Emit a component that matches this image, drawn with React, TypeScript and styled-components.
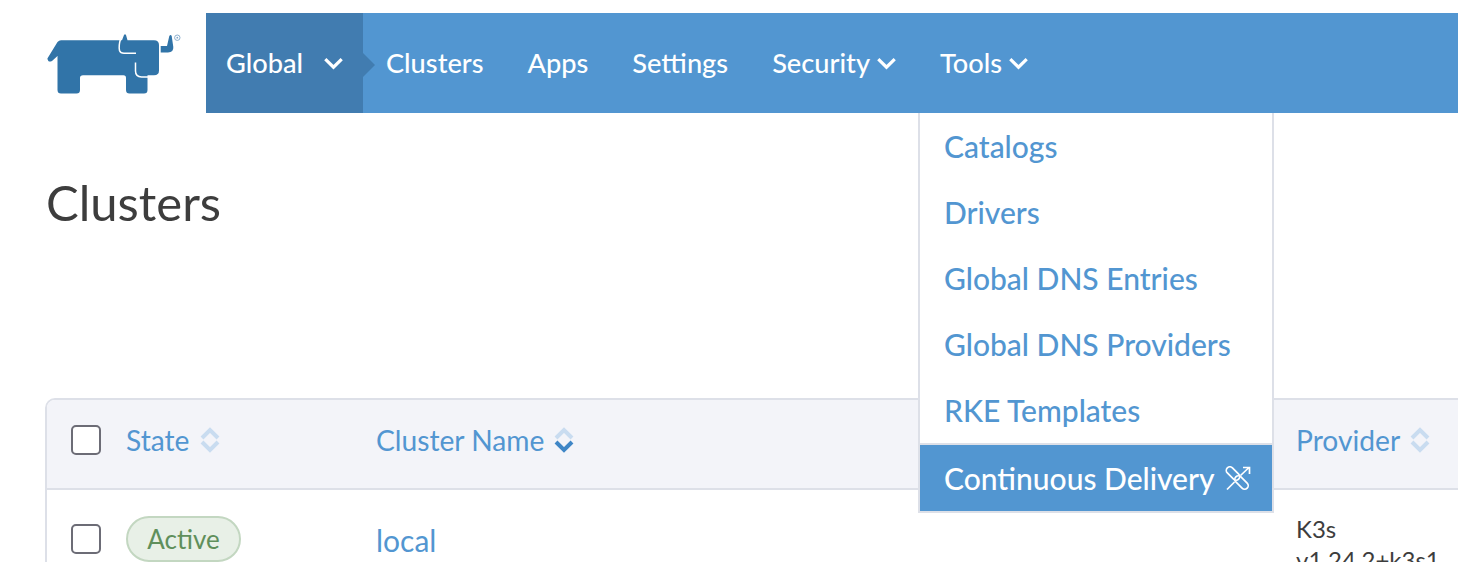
import React from "react";
import styled, { createGlobalStyle } from "styled-components";

const Global = createGlobalStyle`
  html, body { margin: 0; height: 562px; overflow: hidden; background: #fff; }
  body { font-family: Lato, "Open Sans", sans-serif; color: #3d3d3d; }
`;
const Page = styled.div`width: 1458px; height: 562px; overflow: hidden;`;
const Top = styled.header`display: flex; align-items: center; padding-top: 13px; height: 100px;`;
const LogoBox = styled.div`width: 206px; padding-left: 40px; box-sizing: border-box; display: flex; align-items: center;`;
const Nav = styled.nav`flex: 1; height: 100px; display: flex; align-items: center; background: #5296d1; color: #fff; font-size: 27.2px; font-weight: 500;`;
const Scope = styled.div`
  position: relative; width: 157px; height: 100%; box-sizing: border-box; padding: 0 0 2px 20px;
  display: flex; align-items: center; background: #417cb0; margin-right: 1px;
  & > svg { margin-left: 21px; margin-top: 2px; }
  &::after {
    content: ""; position: absolute; left: 100%; top: 40px; width: 12px; height: 24px;
    background: #417cb0; clip-path: polygon(0 0, 100% 50%, 0 100%);
  }
`;
const NavItem = styled.div`
  position: relative; height: 100%; box-sizing: border-box; padding: 0 22px 2px; display: flex; align-items: center; gap: 7px; white-space: nowrap;
  & > svg { margin-top: 2px; }
`;
const Menu = styled.div`
  position: absolute; top: 100%; left: 0; width: 356px; box-sizing: border-box; padding-top: 2px;
  border: solid #dde0e8; border-width: 0 2px 2px 2px; background: #fff; z-index: 2;
`;
const MenuItem = styled.div`
  height: 66px; box-sizing: border-box; padding: 0 0 4px 24px; display: flex; align-items: center; color: #5296d1; font-size: 30px;
`;
const MenuActive = styled(MenuItem)`
  height: 68px; padding-bottom: 0; margin-top: -2px; border-top: 2px solid #dde0e8; background: #5296d1; color: #fff; gap: 10px;
`;
const Main = styled.main`padding: 0 0 0 45px;`;
const Title = styled.h1`margin: 61px 0 0 1px; height: 224px; font-size: 49px; line-height: 56px; font-weight: 400; color: #3d3d3d;`;
const Table = styled.div`width: 1500px; border: 2px solid #dde0e8; border-radius: 10px 0 0 0; box-sizing: border-box;`;
const HeadRow = styled.div`
  display: grid; grid-template-columns: 79px 250px 920px 1fr; align-items: center; height: 80px; padding-bottom: 8px;
  background: #f3f4f9; border-bottom: 2px solid #dde0e8; border-radius: 8px 0 0 0;
`;
const BodyRow = styled.div`
  display: grid; grid-template-columns: 79px 250px 920px 1fr; align-items: start; padding-top: 26px;
`;
const CheckCell = styled.div`padding-left: 24px; display: flex; align-items: center;`;
const Check = styled.span<{ $top?: number }>`
  display: block; width: 30px; height: 30px; box-sizing: border-box; border: 2px solid #6c6c76; border-radius: 5px; background: #fff;
  margin-top: ${(p) => p.$top ?? 0}px;
`;
const HeadCell = styled.div`display: flex; align-items: center; gap: 10px; color: #5296d1; font-size: 28.2px;`;
const Pill = styled.span`
  display: inline-flex; align-items: center; justify-content: center; width: 115px; height: 46px; box-sizing: border-box;
  border: 2px solid #c3d7c1; border-radius: 23px; background: #e8f0e7; color: #5f8f5b; font-size: 26px;
`;
const LinkText = styled.a`display: block; color: #5296d1; font-size: 30px; line-height: 48px;`;
const Provider = styled.div`font-size: 24px; line-height: 31px; color: #3d3d3d; margin-top: -3px;`;

const Chevron = () => (
  <svg width="19" height="13" viewBox="0 0 19 13"><path d="M1.3 2.2L9.5 10.2l8.2-8" fill="none" stroke="#fff" strokeWidth="3.2" /></svg>
);
const Sort = ({ active }: { active?: boolean }) => (
  <svg width="20" height="28" viewBox="0 0 20 28" fill="none" strokeWidth="4">
    <path d="M2 12l8-8 8 8" stroke="#c9dcf0" />
    <path d="M2 16l8 8 8-8" stroke={active ? "#3f86c6" : "#c9dcf0"} />
  </svg>
);
const Logo = () => (
  <svg width="150" height="85" viewBox="0 0 150 85">
    <path fill="#3174a8" d="M7.4 37.5 L17.5 21 Q19 19.3 21 19.3 L82 19.3 L84 14 Q85 12.5 86 14 L87.5 19.3 L114 19.3 Q119 19.3 119 24 L119 49.5 Q119 54.3 114 54.3 L107.5 54.3 L107.5 69 Q107.5 72.5 104 72.5 L89.5 72.5 Q86 72.5 86 69 L86 57 Q86 54.3 83.5 54.3 L43 54.3 Q40 54.3 40 57 L40 69 Q40 72.5 36.5 72.5 L21 72.5 Q17.5 72.5 17.5 69 L17.5 35 L12 40 Q8 42 7.4 37.5 Z" />
    <path fill="none" stroke="#fff" strokeWidth="1.5" d="M80.5 18 Q78.5 25 79.5 29.5 Q80.5 32.3 84 32.3 L96 32.3" />
    <path fill="none" stroke="#fff" strokeWidth="1.5" d="M95.5 41.5 L95.5 50 Q95.5 55.8 101.5 56 L108.5 56" />
    <path fill="#3174a8" d="M120.7 25 L127 25 L129.3 15 Q130.7 12.8 131.7 15 L133.3 26 Q133.8 31 128 31.5 L120.7 31.5 Z" />
    <circle cx="137.3" cy="16.7" r="2.7" fill="none" stroke="#7fa6c8" strokeWidth="0.9" />
    <circle cx="137.3" cy="16.7" r="0.9" fill="#7fa6c8" />
  </svg>
);
const ChainIcon = () => (
  <svg width="26" height="25" viewBox="0 0 26 25" fill="none" stroke="#fff" strokeWidth="1.7">
    <rect x="-8" y="-3.6" width="16" height="7.2" rx="3.6" transform="translate(8 7.5) rotate(45)" />
    <rect x="-8" y="-3.6" width="16" height="7.2" rx="3.6" transform="translate(16.5 16.5) rotate(45)" />
    <path d="M15.5 9.5 L24 1.5 M18 1.5 H24.5 V8" />
    <path d="M9.5 16 L2 23.5" />
  </svg>
);

export default function App() {
  return (
    <Page>
      <Global />
      <Top>
        <LogoBox><Logo /></LogoBox>
        <Nav>
          <Scope>Global<Chevron /></Scope>
          <NavItem>Clusters</NavItem>
          <NavItem>Apps</NavItem>
          <NavItem>Settings</NavItem>
          <NavItem>Security<Chevron /></NavItem>
          <NavItem>
            Tools<Chevron />
            <Menu>
              <MenuItem>Catalogs</MenuItem>
              <MenuItem>Drivers</MenuItem>
              <MenuItem>Global DNS Entries</MenuItem>
              <MenuItem>Global DNS Providers</MenuItem>
              <MenuItem>RKE Templates</MenuItem>
              <MenuActive>Continuous Delivery<ChainIcon /></MenuActive>
            </Menu>
          </NavItem>
        </Nav>
      </Top>
      <Main>
        <Title>Clusters</Title>
        <Table>
          <HeadRow>
            <CheckCell><Check /></CheckCell>
            <HeadCell>State<Sort /></HeadCell>
            <HeadCell>Cluster Name<Sort active /></HeadCell>
            <HeadCell>Provider<Sort /></HeadCell>
          </HeadRow>
          <BodyRow>
            <CheckCell><Check $top={8} /></CheckCell>
            <Pill>Active</Pill>
            <LinkText>local</LinkText>
            <Provider>K3s<br />v1.24.2+k3s1</Provider>
          </BodyRow>
        </Table>
      </Main>
    </Page>
  );
}
